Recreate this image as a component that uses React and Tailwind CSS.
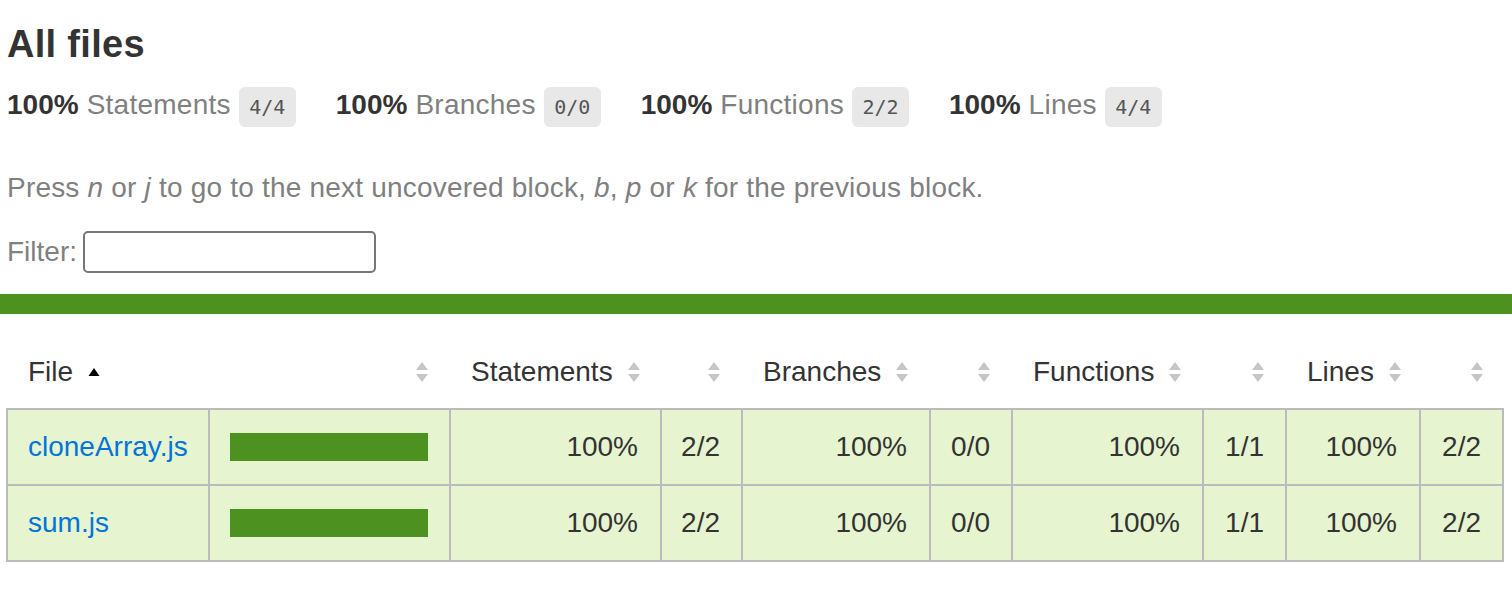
import React from "react";

function Sorter({ sorted }) {
  if (sorted) {
    return (
      <svg width="14" height="22" viewBox="0 0 14 22" className="ml-[14px] shrink-0">
        <polygon points="1.5,15 7,7 12.5,15" fill="#000" />
      </svg>
    );
  }
  return (
    <svg width="14" height="22" viewBox="0 0 14 22" className="ml-[14px] shrink-0">
      <polygon points="1,9 7,1 13,9" fill="#c6c6c6" />
      <polygon points="1,13 7,21 13,13" fill="#c6c6c6" />
    </svg>
  );
}

function Stat({ label, frac }) {
  return (
    <div className="flex items-start pr-[40px]">
      <span className="text-[28px] leading-[36px] font-bold text-[#333]">100%</span>
      <span className="text-[28px] leading-[36px] text-[#808080] ml-[8px] tracking-[0.25px]">{label}</span>
      <span className="ml-[8px] h-[40px] w-[57px] flex items-center justify-center rounded-[6px] bg-[#e8e8e8] text-[#555] text-[20px] font-['DejaVu_Sans_Mono',monospace]">
        {frac}
      </span>
    </div>
  );
}

function Row({ name, s, b, f, l }) {
  const cell = "h-[74px] flex items-center border-l-2 border-[#bbb] shrink-0";
  return (
    <div className="flex border-b-2 border-[#bbb] bg-[#e6f5d0]">
      <div className={`${cell} w-[202px] pl-[20px] text-[#0074d9]`}>{name}</div>
      <div className={`${cell} w-[241px] pl-[20px]`}>
        <div className="h-[28px] w-[198px] bg-[#4d9221]" />
      </div>
      <div className={`${cell} w-[211px] justify-end pr-[22px]`}>100%</div>
      <div className={`${cell} w-[81px] justify-end pr-[21px]`}>{s}</div>
      <div className={`${cell} w-[188px] justify-end pr-[22px]`}>100%</div>
      <div className={`${cell} w-[82px] justify-end pr-[21px]`}>{b}</div>
      <div className={`${cell} w-[191px] justify-end pr-[22px]`}>100%</div>
      <div className={`${cell} w-[83px] justify-end pr-[21px]`}>{f}</div>
      <div className={`${cell} w-[134px] justify-end pr-[22px]`}>100%</div>
      <div className={`${cell} w-[85px] justify-end pr-[21px] border-r-2`}>{l}</div>
    </div>
  );
}

export default function App() {
  const head = "h-[72px] flex items-center shrink-0 border-l-2 border-transparent";
  return (
    <div className="w-[1512px] h-[604px] overflow-hidden bg-white text-[#333] font-['Liberation_Sans',Arial,sans-serif]">
      <div className="pl-[7px] pt-[24px]">
        <h1 className="text-[38px] leading-[40px] font-bold text-[#333] tracking-[0.3px]">All files</h1>
        <div className="flex mt-[23px]">
          <Stat label="Statements" frac="4/4" />
          <Stat label="Branches" frac="0/0" />
          <Stat label="Functions" frac="2/2" />
          <Stat label="Lines" frac="4/4" />
        </div>
        <p className="mt-[45px] text-[28px] leading-[32px] text-[#808080] tracking-[0.2px]">
          Press <em>n</em> or <em>j</em> to go to the next uncovered block, <em>b</em>, <em>p</em> or <em>k</em> for the previous block.
        </p>
        <div className="mt-[27px] flex items-center h-[42px]">
          <span className="text-[28px] leading-[32px] text-[#808080]">Filter:</span>
          <div className="ml-[6px] w-[293px] h-[42px] border-2 border-[#767676] rounded-[5px] bg-white" />
        </div>
      </div>
      <div className="mt-[21px] h-[20px] bg-[#4d9221]" />
      <div className="pl-[6px] mt-[22px] text-[28px] leading-[32px]">
        <div className="flex">
          <div className={`${head} w-[202px] pl-[20px]`}>
            <span>File</span>
            <Sorter sorted />
          </div>
          <div className={`${head} w-[241px] pr-[20px] justify-end`}>
            <Sorter />
          </div>
          <div className={`${head} w-[211px] pl-[20px]`}>
            <span>Statements</span>
            <Sorter />
          </div>
          <div className={`${head} w-[81px] pr-[20px] justify-end`}>
            <Sorter />
          </div>
          <div className={`${head} w-[188px] pl-[20px]`}>
            <span>Branches</span>
            <Sorter />
          </div>
          <div className={`${head} w-[82px] pr-[20px] justify-end`}>
            <Sorter />
          </div>
          <div className={`${head} w-[191px] pl-[20px]`}>
            <span>Functions</span>
            <Sorter />
          </div>
          <div className={`${head} w-[83px] pr-[20px] justify-end`}>
            <Sorter />
          </div>
          <div className={`${head} w-[134px] pl-[20px]`}>
            <span>Lines</span>
            <Sorter />
          </div>
          <div className={`${head} w-[85px] pr-[20px] justify-end`}>
            <Sorter />
          </div>
        </div>
        <div className="w-[1498px] border-t-2 border-[#bbb]">
          <Row name="cloneArray.js" s="2/2" b="0/0" f="1/1" l="2/2" />
          <Row name="sum.js" s="2/2" b="0/0" f="1/1" l="2/2" />
        </div>
      </div>
    </div>
  );
}
